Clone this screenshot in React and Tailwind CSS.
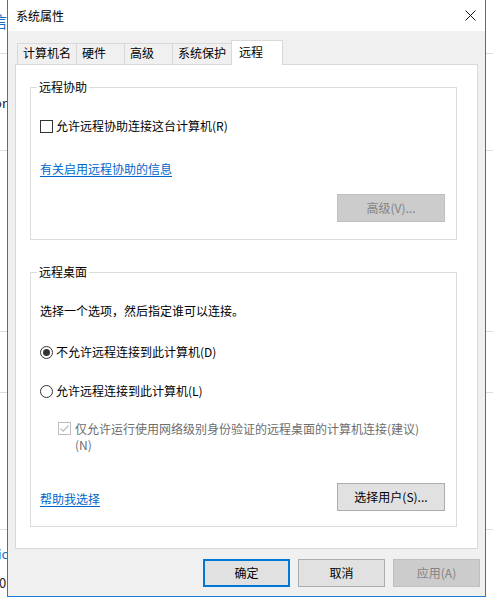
const FONT = "font-['Noto_Sans_CJK_SC','Liberation_Sans',sans-serif]"

const TABS = [
  { label: '计算机名', w: 'w-[59px]' },
  { label: '硬件', w: 'w-[48px]' },
  { label: '高级', w: 'w-[48px]' },
  { label: '系统保护', w: 'w-[59px]' },
]

function Tab({ label, w }) {
  return (
    <div className={`${w} h-[21px] bg-[#f0f0f0] border-l border-t border-[#d9d9d9] pl-[5px] pt-[1px] leading-[16px]`}>
      {label}
    </div>
  )
}

function Button({ children, variant = 'normal', className = '' }) {
  const styles = {
    normal:   'bg-[#e1e1e1] border border-[#adadad] text-black',
    primary:  'bg-[#e1e1e1] border-2 border-[#0078d7] text-black',
    disabled: 'bg-[#cccccc] border border-[#bfbfbf] text-[#838383]',
  }
  return (
    <div className={`h-[28px] flex items-center justify-center leading-[16px] ${styles[variant]} ${className}`}>
      {children}
    </div>
  )
}

function Checkbox({ checked = false, disabled = false }) {
  return (
    <span className={`w-[13px] h-[13px] shrink-0 bg-white border ${disabled ? 'border-[#bcbcbc]' : 'border-[#333333]'} flex items-center justify-center`}>
      {checked && (
        <svg width="11" height="11" viewBox="0 0 11 11">
          <polyline points="1.5,5.5 4.2,8.2 9.5,2.5" fill="none" stroke={disabled ? '#bcbcbc' : '#333'} strokeWidth="1.2" />
        </svg>
      )}
    </span>
  )
}

function Radio({ checked = false }) {
  return (
    <span className="w-[13px] h-[13px] shrink-0 rounded-full bg-white border border-[#333333] flex items-center justify-center">
      {checked && <span className="w-[7px] h-[7px] rounded-full bg-[#333333]" />}
    </span>
  )
}

function Group({ title, className = '', children }) {
  return (
    <div className={`relative w-[427px] border border-[#dcdcdc] ${className}`}>
      <span className="absolute -top-[9px] left-[6px] bg-white px-[2px] leading-[16px]">{title}</span>
      {children}
    </div>
  )
}

export default function App() {
  return (
    <div className={`relative w-[493px] h-[605px] bg-white overflow-hidden text-[12px] text-black ${FONT}`}>
      {/* background window behind the dialog */}
      <div className="flex flex-col">
        <div className="h-[54px] border-b border-[#dcdcdc]" />
        <div className="h-[97px] border-b border-[#dcdcdc]" />
        <div className="h-[181px] border-b border-[#dcdcdc]" />
        <div className="h-[61px] border-b border-[#dcdcdc]" />
        <div className="h-[137px] border-b border-[#dcdcdc]" />
      </div>
      <span className="absolute left-[-9px] top-[11px] text-[16px] leading-[20px] text-[#1a6fc4]">信</span>
      <span className="absolute left-[-6px] top-[95px] text-[13px] leading-[16px] text-[#222]">or</span>
      <span className="absolute left-[-2px] top-[546px] text-[13px] leading-[16px] text-[#1a6fc4]">ic</span>
      <span className="absolute left-[-1px] top-[575px] text-[13px] leading-[16px] text-[#222]">0</span>

      {/* dialog */}
      <div className="absolute left-[7px] top-0 w-[479px] h-[597px] border-x border-b border-[#1c7cd6] bg-[#f0f0f0] flex flex-col">
        {/* title bar */}
        <div className="h-[31px] bg-white flex items-center justify-between pl-[8px] pr-[9px]">
          <span className="leading-[16px]">系统属性</span>
          <svg width="11" height="11" viewBox="0 0 11 11">
            <path d="M0.5 0.5 L10.5 10.5 M10.5 0.5 L0.5 10.5" stroke="#111" strokeWidth="1" fill="none" />
          </svg>
        </div>

        <div className="flex flex-col px-[7px] pt-[9px]">
          {/* tabs */}
          <div className="flex items-end ml-[2px] h-[24px]">
            {TABS.map(t => <Tab key={t.label} {...t} />)}
            <div className="relative z-10 w-[52px] h-[25px] -mb-px bg-white border-x border-t border-[#d9d9d9] pl-[7px] pt-[3px] leading-[16px]">
              远程
            </div>
          </div>

          {/* tab panel */}
          <div className="h-[485px] bg-white border border-[#d9d9d9] pt-[22px] px-[14px] flex flex-col">
            <Group title="远程协助" className="h-[153px]">
              <div className="flex flex-col pt-[30px] pl-[9px] pr-[11px]">
                <label className="flex items-center gap-[3px] h-[16px] leading-[16px]">
                  <Checkbox />
                  <span>允许远程协助连接这台计算机(R)</span>
                </label>
                <a className="mt-[27px] self-start leading-[16px] text-[#0066cc] underline underline-offset-[2px]">有关启用远程协助的信息</a>
                <Button variant="disabled" className="mt-[17px] self-end w-[108px]">高级(V)...</Button>
              </div>
            </Group>

            <Group title="远程桌面" className="h-[255px] mt-[32px]">
              <div className="flex flex-col pt-[30px] pl-[9px] pr-[11px]">
                <p className="leading-[16px]">选择一个选项，然后指定谁可以连接。</p>
                <label className="mt-[25px] flex items-center gap-[3px] h-[16px] leading-[16px]">
                  <Radio checked />
                  <span>不允许远程连接到此计算机(D)</span>
                </label>
                <label className="mt-[23px] flex items-center gap-[3px] h-[16px] leading-[16px]">
                  <Radio />
                  <span>允许远程连接到此计算机(L)</span>
                </label>
                <label className="mt-[22px] ml-[18px] flex items-start gap-[4px] leading-[16px] text-[#6d6d6d]">
                  <span className="mt-[1px]"><Checkbox checked disabled /></span>
                  <span>仅允许运行使用网络级别身份验证的远程桌面的计算机连接(建议)<br />(N)</span>
                </label>
                <div className="mt-[30px] flex items-start justify-between">
                  <a className="mt-[8px] leading-[16px] text-[#0066cc] underline underline-offset-[2px]">帮助我选择</a>
                  <Button className="w-[108px]">选择用户(S)...</Button>
                </div>
              </div>
            </Group>
          </div>

          {/* dialog buttons */}
          <div className="mt-[10px] -mr-[2px] flex justify-end gap-[8px]">
            <Button variant="primary" className="w-[87px]">确定</Button>
            <Button className="w-[87px]">取消</Button>
            <Button variant="disabled" className="w-[87px]">应用(A)</Button>
          </div>
        </div>
      </div>
    </div>
  )
}
